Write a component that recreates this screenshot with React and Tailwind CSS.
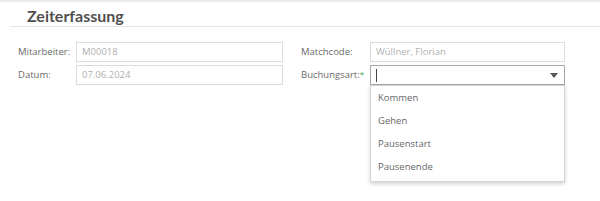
const Field = ({ label, value, required, labelWidth, inputWidth, active, children }) => (
  <div className="flex items-center h-[20px]">
    <div className={`${labelWidth} text-[#6a6a6a] text-[9.5px]`}>
      {label}
      {required && <span className="text-[#2e9e3e] text-[8px] align-top">*</span>}
    </div>
    <div
      className={`${inputWidth} h-[20px] border ${
        active ? "border-[#a8a8a8]" : "border-[#dcdcdc]"
      } flex items-center px-[5px] text-[9.5px] text-[#b0b0b0] relative`}
    >
      {value}
      {children}
    </div>
  </div>
);

export default function App() {
  const options = ["Kommen", "Gehen", "Pausenstart", "Pausenende"];

  return (
    <div
      className="w-[600px] h-[201px] bg-white overflow-hidden relative"
      style={{ fontFamily: '"Open Sans", "Noto Sans", sans-serif' }}
    >
      <div className="h-[3px] bg-gradient-to-b from-[#e4e4e4] to-white" />
      <div className="ml-[10px] border-b border-[#e6e6e6] h-[24px] pl-[17px] flex items-end pb-[2px]">
        <h1 className="font-['Lato',sans-serif] text-[16px] font-bold text-[#505050] leading-none">
          Zeiterfassung
        </h1>
      </div>

      <div className="mt-[15px] flex">
        <div className="ml-[18px] flex flex-col gap-[3px]">
          <Field label="Mitarbeiter:" value="M00018" labelWidth="w-[58px]" inputWidth="w-[207px]" />
          <Field label="Datum:" value="07.06.2024" labelWidth="w-[58px]" inputWidth="w-[207px]" />
        </div>
        <div className="ml-[18px] flex flex-col gap-[3px]">
          <Field label="Matchcode:" value="Wüllner, Florian" labelWidth="w-[69px]" inputWidth="w-[195px]" />
          <Field label="Buchungsart:" required active labelWidth="w-[69px]" inputWidth="w-[195px]">
            <span className="w-px h-[13px] bg-[#444]" />
            <svg className="absolute right-[6px] top-[7px]" width="8" height="5" viewBox="0 0 8 5">
              <path d="M0 0 L8 0 L4 5 Z" fill="#555" />
            </svg>
            <div className="absolute left-[-1px] top-[19px] w-[195px] bg-white border border-[#d4d4d4] shadow-[0_2px_4px_rgba(0,0,0,0.18)] pt-[1px] pb-[2px] z-10">
              {options.map((o) => (
                <div key={o} className="h-[23px] flex items-center px-[7px] text-[9.5px] text-[#666]">
                  {o}
                </div>
              ))}
            </div>
          </Field>
        </div>
      </div>
    </div>
  );
}
